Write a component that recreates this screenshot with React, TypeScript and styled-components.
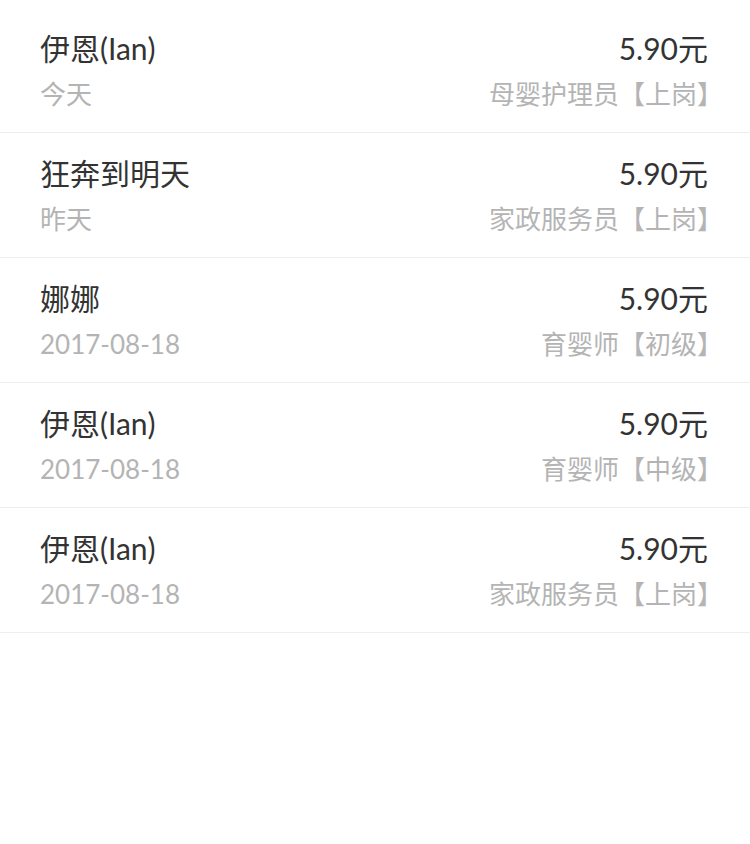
import styled, { createGlobalStyle } from "styled-components";

const GlobalStyle = createGlobalStyle`
  html, body {
    margin: 0;
    padding: 0;
    background: #fff;
  }
  body {
    font-family: Lato, "Noto Sans CJK SC", sans-serif;
  }
`;

const List = styled.ul`
  margin: 0;
  padding: 8px 0 0;
  list-style: none;
`;

const Row = styled.li`
  height: 124px;
  padding: 0 40px;
  display: flex;
  justify-content: space-between;
  align-items: center;
  border-bottom: 1px solid #eeeeee;
`;

const Column = styled.div<{ $right?: boolean }>`
  display: flex;
  flex-direction: column;
  align-items: ${props => (props.$right ? "flex-end" : "flex-start")};
  gap: 8px;
`;

const Name = styled.span`
  font-size: 30px;
  line-height: 40px;
  color: #333;
`;

const Price = styled(Name)`
  margin-right: 2px;
`;

const Sub = styled.span`
  font-size: 26px;
  line-height: 36px;
  color: #b4b4b4;
`;

// closing bracket carries its ink on the left half, pull it to the edge
const Job = styled(Sub)`
  margin-right: -13px;
`;

const records = [
  { name: "伊恩(Ian)", date: "今天", price: "5.90元", job: "母婴护理员【上岗】" },
  { name: "狂奔到明天", date: "昨天", price: "5.90元", job: "家政服务员【上岗】" },
  { name: "娜娜", date: "2017-08-18", price: "5.90元", job: "育婴师【初级】" },
  { name: "伊恩(Ian)", date: "2017-08-18", price: "5.90元", job: "育婴师【中级】" },
  { name: "伊恩(Ian)", date: "2017-08-18", price: "5.90元", job: "家政服务员【上岗】" },
];

export default function App() {
  return (
    <>
      <GlobalStyle />
      <List>
        {records.map((r, i) => (
          <Row key={i}>
            <Column>
              <Name>{r.name}</Name>
              <Sub>{r.date}</Sub>
            </Column>
            <Column $right>
              <Price>{r.price}</Price>
              <Job>{r.job}</Job>
            </Column>
          </Row>
        ))}
      </List>
    </>
  );
}
